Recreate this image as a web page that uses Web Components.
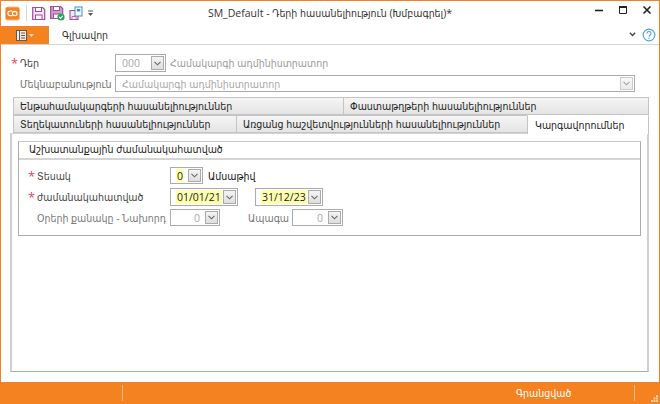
<!DOCTYPE html>
<html lang="hy"><head><meta charset="utf-8"><title>SM_Default</title>
<style>
html,body{margin:0;padding:0;background:#fff}
body{font:10.5px "Open Sans","DejaVu Sans Condensed","DejaVu Sans",sans-serif;color:#222}
</style></head><body>
<app-window>
  <title-bar slot="top">SM_Default - Դերի հասանելիություն (Խմբագրել)*</title-bar>
  <ribbon-bar slot="top">Գլխավոր</ribbon-bar>
  <form-row style="height:18px;margin-top:9px;padding-left:10px">
    <req-label width="104" star="9">Դեր</req-label>
    <drop-box width="51" value="000" disabled align="left"></drop-box>
    <span style="margin-left:4px;color:#9a9a9a">Համակարգի ադմինիստրատոր</span>
  </form-row>
  <form-row style="height:17px;margin-top:3px;padding-left:19px">
    <plain-label width="95" color="#6f6f6f">Մեկնաբանություն</plain-label>
    <drop-box width="520" value="Համակարգի ադմինիստրատոր" disabled align="left"></drop-box>
  </form-row>
  <tab-panel style="margin-top:5px">
    <tab-item slot="r1" w="330">Ենթահամակարգերի հասանելիություններ</tab-item>
    <tab-item slot="r1" w="306" last>Փաստաթղթերի հասանելիություններ</tab-item>
    <tab-item slot="r2" w="223">Տեղեկատուների հասանելիություններ</tab-item>
    <tab-item slot="r2" w="291">Առցանց հաշվետվությունների հասանելիություններ</tab-item>
    <tab-item slot="r2" w="122" active last>Կարգավորումներ</tab-item>
    <group-box caption="Աշխատանքային ժամանակահատված">
      <form-row style="height:17px;margin-top:7px;padding-left:9px">
        <req-label width="142" star="9">Տեսակ</req-label>
        <drop-box width="33" value="0" align="left" hl></drop-box>
        <span style="margin-left:5px;color:#111">Ամսաթիվ</span>
      </form-row>
      <form-row style="height:18px;margin-top:4px;padding-left:9px">
        <req-label width="142" star="9">ժամանակահատված</req-label>
        <drop-box width="68" value="01/01/21" hl></drop-box>
        <drop-box width="68" value="31/12/23" hl style="margin-left:17px"></drop-box>
      </form-row>
      <form-row style="height:17px;margin-top:3px;padding-left:18px">
        <plain-label width="133" color="#777">Օրերի քանակը - Նախորդ</plain-label>
        <drop-box width="50" value="0" disabled align="right"></drop-box>
        <plain-label width="44" color="#777" style="margin-left:28px">Ապագա</plain-label>
        <drop-box width="51" value="0" disabled align="right"></drop-box>
      </form-row>
    </group-box>
  </tab-panel>
  <status-bar slot="bottom">Գրանցված</status-bar>
</app-window>
<script>
const def=(name,html)=>{
  customElements.define(name,class extends HTMLElement{
    connectedCallback(){
      if(this.shadowRoot)return;
      const r=this.attachShadow({mode:"open"});
      r.innerHTML=typeof html==="function"?html(this):html;
    }
  });
};
def("app-window",`<style>
:host{display:flex;flex-direction:column;width:660px;height:404px;box-sizing:border-box;border:1px solid #f58220;border-bottom:0;overflow:hidden;background:#fff}
.main{flex:1;min-height:0}
</style><slot name="top"></slot><div class="main"><slot></slot></div><slot name="bottom"></slot>`);
def("title-bar",`<style>
:host{display:block;height:24px;flex:none}
.b{position:relative;height:24px;display:flex;align-items:center}
.t{position:absolute;left:0;right:0;top:5px;text-align:center;color:#333;pointer-events:none}
.tools{display:flex;align-items:center;padding-left:4px;height:24px}
svg{display:block}
.sep{width:1px;height:16px;background:#d8d8d8;margin:0 5px 0 6px}
.win{margin-left:auto;display:flex;gap:8px;padding-right:4px;align-self:flex-start;margin-top:4px}
</style><div class="b">
<div class="tools">
<svg width="15" height="15" viewBox="0 0 15 15"><rect x=".5" y="1" width="14" height="13" rx="2" fill="#f58220" stroke="#f3b98c"/><path d="M7.200 5H5.200a2.300 2.300 0 0 0 0 4.600h2" fill="none" stroke="#fff" stroke-width="1.200"/><ellipse cx="9.700" cy="7.500" rx="2.300" ry="2.200" fill="none" stroke="#fff" stroke-width="1.200"/></svg>
<span class="sep"></span>
<svg width="14" height="15" viewBox="0 0 14 15"><path d="M.7 1.500h10l2 2v10H.7z" fill="#f3e4f3" stroke="#a44ba0" stroke-width="1.200"/><rect x="3.500" y="1.500" width="6" height="4" fill="#fff" stroke="#a44ba0"/><rect x="3.500" y="9" width="6.500" height="4.500" fill="#fff" stroke="#a44ba0"/></svg>
<svg width="16" height="16" viewBox="0 0 16 16" style="margin-left:4px"><path d="M.7 1.500h10l2 2v10H.7z" fill="#c9a0c8" stroke="#a44ba0" stroke-width="1.200"/><rect x="3.500" y="1.500" width="6" height="4" fill="#fff" stroke="#a44ba0"/><rect x="3.500" y="9" width="6" height="4.500" fill="#fff" stroke="#a44ba0"/><circle cx="11" cy="12" r="3.600" fill="#25a55a"/><path d="M9.200 12l1.400 1.400 2.200-2.500" fill="none" stroke="#fff" stroke-width="1.100"/></svg>
<svg width="14" height="15" viewBox="0 0 14 15" style="margin-left:3px"><path d="M1 4.500h8v9H1z" fill="#f3e4f3" stroke="#a44ba0" stroke-width="1.100"/><rect x="6" y="1" width="7" height="9" fill="#fff" stroke="#3a8fc8"/><rect x="7.800" y="3" width="3.500" height="2.500" fill="#3a8fc8"/><path d="M3 10.500h4v3H3z" fill="#fff" stroke="#a44ba0" stroke-width=".8"/></svg>
<svg width="7" height="7" viewBox="0 0 7 7" style="margin-left:4px"><path d="M1 1h5" stroke="#555"/><path d="M1 3h5L3.500 6z" fill="#555"/></svg>
</div>
<div class="t"><slot></slot></div>
<div class="win">
<svg width="16" height="12" viewBox="0 0 16 12"><path d="M4 5.500h8" stroke="#222" stroke-width="1.600"/></svg>
<svg width="16" height="12" viewBox="0 0 16 12"><path d="M4.500 1.500h7v7h-7z" fill="none" stroke="#222"/><path d="M4 2h8" stroke="#222" stroke-width="2"/></svg>
<svg width="16" height="12" viewBox="0 0 16 12"><path d="M4.500 1.500l7 7M11.500 1.500l-7 7" stroke="#222" stroke-width="1.600"/></svg>
</div></div>`);
def("ribbon-bar",`<style>
:host{display:flex;height:20px;box-sizing:border-box;flex:none;border-bottom:1px solid #d4d4d4;align-items:stretch}
.m{width:48px;margin-top:1px;background:#f58220;display:flex;align-items:center;justify-content:center;gap:2px}
.t{margin-left:13px;padding-top:2px;color:#333;line-height:16px}
.r{margin-left:auto;display:flex;align-items:center;gap:6px;padding-right:3px}
svg{display:block}
</style><div class="m"><svg width="11" height="11" viewBox="0 0 11 11"><rect x=".5" y=".5" width="10" height="10" fill="#f9e9da" stroke="#5a5a5a"/><path d="M3.500 .5v10M5 3h4M5 5.500h4M5 8h4" stroke="#5a5a5a"/></svg><svg width="5" height="3" viewBox="0 0 5 3"><path d="M0 0h5L2.500 3z" fill="#d8d8d8"/></svg></div>
<div class="t"><slot></slot></div>
<div class="r"><svg width="7" height="5" viewBox="0 0 7 5"><path d="M.8 .8l2.700 2.700L6.200 .8" fill="none" stroke="#444" stroke-width="1.300"/></svg>
<svg width="14" height="14" viewBox="0 0 14 14"><circle cx="7" cy="7" r="5.800" fill="none" stroke="#4ea6dc" stroke-width="1.200"/><path d="M5 5.500a2 2 0 1 1 3 1.700c-.7.4-1 .8-1 1.600" fill="none" stroke="#4ea6dc" stroke-width="1.100"/><circle cx="7" cy="10.300" r=".7" fill="#4ea6dc"/></svg></div>`);
def("form-row",`<style>:host{display:flex;align-items:center;box-sizing:border-box}</style><slot></slot>`);
def("req-label",h=>`<style>:host{display:flex;align-items:center;box-sizing:border-box;width:${h.getAttribute("width")}px;color:#444;white-space:nowrap;flex:none}
.s{color:#f0405a;width:${h.getAttribute("star")||9}px;font-size:13px;line-height:10px;flex:none}</style><span class="s">*</span><slot></slot>`);
def("plain-label",h=>`<style>:host{display:block;box-sizing:border-box;width:${h.getAttribute("width")}px;color:${h.getAttribute("color")||"#444"};white-space:nowrap;flex:none}</style><slot></slot>`);
def("drop-box",h=>{
 const d=h.hasAttribute("disabled"),hl=h.hasAttribute("hl"),a=h.getAttribute("align")||"left";
 return `<style>:host{display:flex;box-sizing:border-box;height:100%;width:${h.getAttribute("width")}px;border:1px solid #ababab;background:#fff;flex:none;padding:1px;align-items:stretch}
.v{flex:1;min-width:0;display:flex;align-items:center;justify-content:${a==="right"?"flex-end":"flex-start"};padding:0 4px;color:${d?"#a8a8a8":"#222"};white-space:nowrap;overflow:hidden}
.v span{background:${hl?"#ffffb0":"transparent"};line-height:14px;padding:0 1px}
.b{width:13px;flex:none;border:1px solid #ababab;background:linear-gradient(#f4f4f4,#dedede);display:flex;align-items:center;justify-content:center;box-sizing:border-box;opacity:${d&&h.getAttribute("width")>60?.6:1}}
svg{display:block}</style><div class="v"><span>${h.getAttribute("value")}</span></div><div class="b"><svg width="7" height="5" viewBox="0 0 7 5"><path d="M.5 .8l3 3 3-3" fill="none" stroke="#666" stroke-width="1.100"/></svg></div>`});
def("tab-item",h=>{const a=h.hasAttribute("active"),l=h.hasAttribute("last");return `<style>:host{display:flex;align-items:center;box-sizing:border-box;width:${h.getAttribute("w")}px;height:${a?19:18}px;padding-left:6px;color:#222;white-space:nowrap;overflow:hidden;flex:none;
border-top:1px solid ${a?"#fff":"#c4c4c4"};border-left:1px solid #c4c4c4;${l?"border-right:1px solid #c4c4c4;":""}background:${a?"#fff":"linear-gradient(#f5f5f5,#e4e4e4)"};${a?"padding-left:7px;margin-bottom:-1px;position:relative;z-index:1":"border-bottom:1px solid #c4c4c4"}}</style><slot></slot>`});
def("tab-panel",`<style>
:host{display:block;margin-left:9px;width:639px}
.rows{padding-left:3px}
.r{display:flex}
.c{box-sizing:border-box;height:239px;border-left:2px solid #cfcfcf;border-right:2px solid #cfcfcf;border-bottom:1px solid #ababab;border-top:1px solid #d4d4d4;padding:7px 6px 0 6px}
</style><div class="rows"><div class="r"><slot name="r1"></slot></div><div class="r"><slot name="r2"></slot></div></div><div class="c"><slot></slot></div>`);
def("group-box",h=>`<style>
:host{display:block;box-sizing:border-box;height:95px;border:1px solid #ababab;border-top-color:#c8c8c8}
.h{height:16px;border-bottom:2px solid #d4d4d4;padding:0 0 0 10px;line-height:15px;color:#222;box-sizing:content-box;white-space:nowrap}
</style><div class="h">${h.getAttribute("caption")}</div><slot></slot>`);
def("status-bar",`<style>
:host{display:flex;height:22px;flex:none;margin:0 -1px;background:#f58220;color:#fff;align-items:center;position:relative}
.s{width:1px;height:16px;background:#fab98a;flex:none}
.t{margin-left:393px;width:118px}
.g{position:absolute;right:2px;bottom:2px}
</style><span style="width:122px"></span><span class="s"></span><span class="t"><slot></slot></span><span class="s"></span>
<svg class="g" width="7" height="7" viewBox="0 0 7 7"><path d="M5 0h2v2H5zM2.500 2.500h2v2h-2zM5 2.500h2v2H5zM0 5h2v2H0zM2.500 5h2v2h-2zM5 5h2v2H5z" fill="#fbd3b3"/></svg>`);
</script>
</body></html>
